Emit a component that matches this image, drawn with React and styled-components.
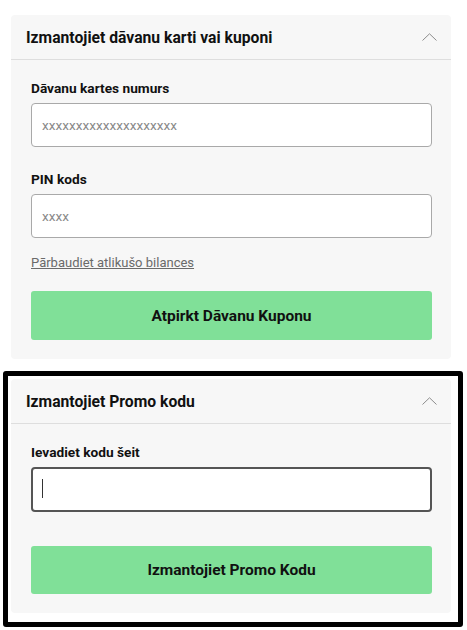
import React from 'react';
import styled, { createGlobalStyle } from 'styled-components';

const GlobalStyle = createGlobalStyle`
    body {
        margin: 0;
        background: #ffffff;
        font-family: Roboto, "Liberation Sans", Arial, sans-serif;
        color: #111;
    }
    * { box-sizing: border-box; }
`

const Page = styled.div`
    width: 467px;
    padding-top: 15px;
`

const Card = styled.div`
    width: 440px;
    margin-left: ${p => p.$inset ? '0' : '11px'};
    background-color: #f7f7f7;
    border-radius: 4px;
`

const Highlight = styled.div`
    width: 460px;
    margin: 12px 0 0 3px;
    border: 5px solid #000;
    border-radius: 3px;
    padding: 3px 6px 9px 3px;
`

const Header = styled.div`
    height: 45px;
    display: flex;
    align-items: center;
    justify-content: space-between;
    padding: 0 14px 0 15px;
    border-bottom: 1px solid #dedede;
    h2 {
        margin: 0;
        font-size: 15.7px;
        font-weight: 700;
        color: #111;
    }
`

const Body = styled.div`
    padding: 20px 19px 19px 20px;
    display: flex;
    flex-direction: column;
`

const Label = styled.label`
    display: block;
    font-size: 13.7px;
    line-height: 17px;
    font-weight: 700;
    color: #111;
    margin-bottom: 6px;
`

const Field = styled.div`
    position: relative;
    margin-bottom: ${p => p.$gap}px;
`

const Input = styled.input`
    display: block;
    width: 401px;
    height: ${p => p.$focused ? 45 : 44}px;
    padding: 0 10px;
    font-family: Roboto, "Liberation Sans", Arial, sans-serif;
    font-size: 13.6px;
    background: #fff;
    border: ${p => p.$focused ? '2px solid #555' : '1px solid #a9a9a9'};
    border-radius: 4px;
    outline: none;
    &::placeholder {
        color: #8a8a8a;
    }
`

const Caret = styled.span`
    position: absolute;
    left: 11px;
    top: 12px;
    width: 1px;
    height: 19px;
    background: #333;
`

const Link = styled.a`
    font-size: 13px;
    line-height: 17px;
    color: #6a6a6a;
    text-decoration: underline;
    align-self: flex-start;
    margin-bottom: 20px;
    cursor: pointer;
`

const Button = styled.button`
    width: 401px;
    height: ${p => p.$h}px;
    border: none;
    border-radius: 3px;
    background-color: #80e098;
    font-family: Roboto, "Liberation Sans", Arial, sans-serif;
    font-size: 15.5px;
    font-weight: 700;
    color: #111;
    cursor: pointer;
`

const Chevron = () => (
    <svg width="15" height="8" viewBox="0 0 15 8" fill="none">
        <path d="M0.5 7.5 L7.5 0.8 L14.5 7.5" stroke="#8c8c8c" strokeWidth="1" />
    </svg>
)

const App = () => {
    return (
        <Page>
            <GlobalStyle />
            <Card>
                <Header>
                    <h2>Izmantojiet dāvanu karti vai kuponi</h2>
                    <Chevron />
                </Header>
                <Body>
                    <Label>Dāvanu kartes numurs</Label>
                    <Field $gap={24}>
                        <Input placeholder="xxxxxxxxxxxxxxxxxxxx" />
                    </Field>
                    <Label>PIN kods</Label>
                    <Field $gap={16}>
                        <Input placeholder="xxxx" />
                    </Field>
                    <Link>Pārbaudiet atlikušo bilances</Link>
                    <Button $h={49}>Atpirkt Dāvanu Kuponu</Button>
                </Body>
            </Card>
            <Highlight>
                <Card $inset>
                    <Header>
                        <h2>Izmantojiet Promo kodu</h2>
                        <Chevron />
                    </Header>
                    <Body>
                        <Label>Ievadiet kodu šeit</Label>
                        <Field $gap={34}>
                            <Input $focused />
                            <Caret />
                        </Field>
                        <Button $h={48}>Izmantojiet Promo Kodu</Button>
                    </Body>
                </Card>
            </Highlight>
        </Page>
    );
};

export default App;
